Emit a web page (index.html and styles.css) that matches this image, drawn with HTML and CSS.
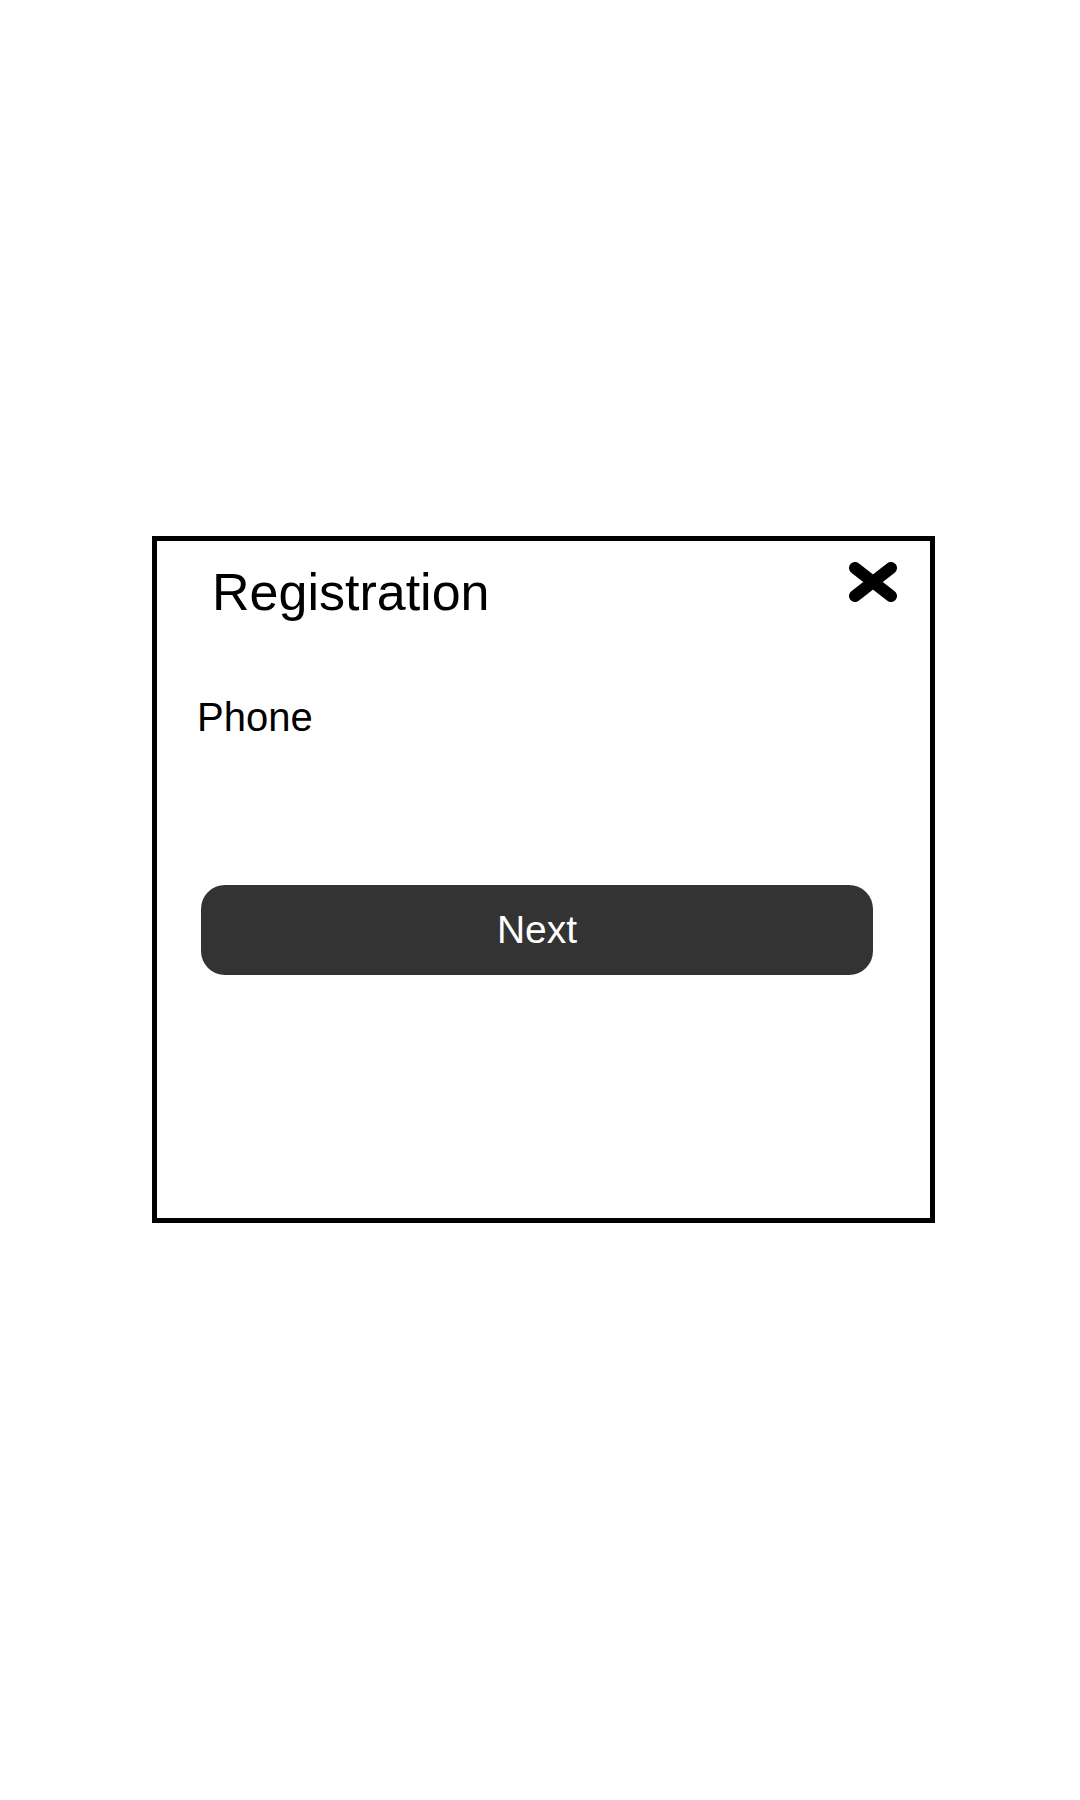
FILE: index.html
```html
<!DOCTYPE html>
<html>
<head>
    <title>Registration</title>
    <link rel="stylesheet" href="styles.css">
</head>
<body>
    <div class="modal">
        <div class="modal-header">
            <h1 class="modal-title">Registration</h1>
            <button class="close-button" aria-label="Close">
                <svg width="48" height="40" viewBox="0 0 48 40">
                    <path d="M6 6 L42 34 M42 6 L6 34" stroke="#000" stroke-width="12" stroke-linecap="round" fill="none"/>
                </svg>
            </button>
        </div>

        <label class="field-label" for="phone">Phone</label>

        <button class="next-button">Next</button>
    </div>
</body>
</html>
```

FILE: styles.css
```css
body {
    margin: 0;
    font-family: "Liberation Sans", Arial, sans-serif;
    background-color: #fefefe;
}

.modal {
    box-sizing: border-box;
    width: 783px;
    height: 687px;
    margin: 536px 0 0 152px;
    border: 5px solid #000;
    background-color: #fff;
    display: flex;
    flex-direction: column;
}

.modal-header {
    display: flex;
    justify-content: space-between;
    align-items: flex-start;
    padding: 21px 33px 0 55px;
}

.modal-title {
    margin: 0;
    font-size: 52px;
    font-weight: normal;
    line-height: 60px;
    color: #000;
}

.close-button {
    padding: 0;
    margin: 0;
    border: none;
    background: none;
    cursor: pointer;
    width: 48px;
    height: 40px;
}

.close-button svg {
    display: block;
}

.field-label {
    margin: 73px 0 0 40px;
    font-size: 40px;
    line-height: 45px;
    color: #000;
}

.next-button {
    margin: 145px 0 0 44px;
    width: 672px;
    height: 90px;
    padding: 0;
    border: none;
    border-radius: 24px;
    background-color: #333333;
    color: #fff;
    font-family: "Liberation Sans", Arial, sans-serif;
    font-size: 39px;
    cursor: pointer;
}
```
